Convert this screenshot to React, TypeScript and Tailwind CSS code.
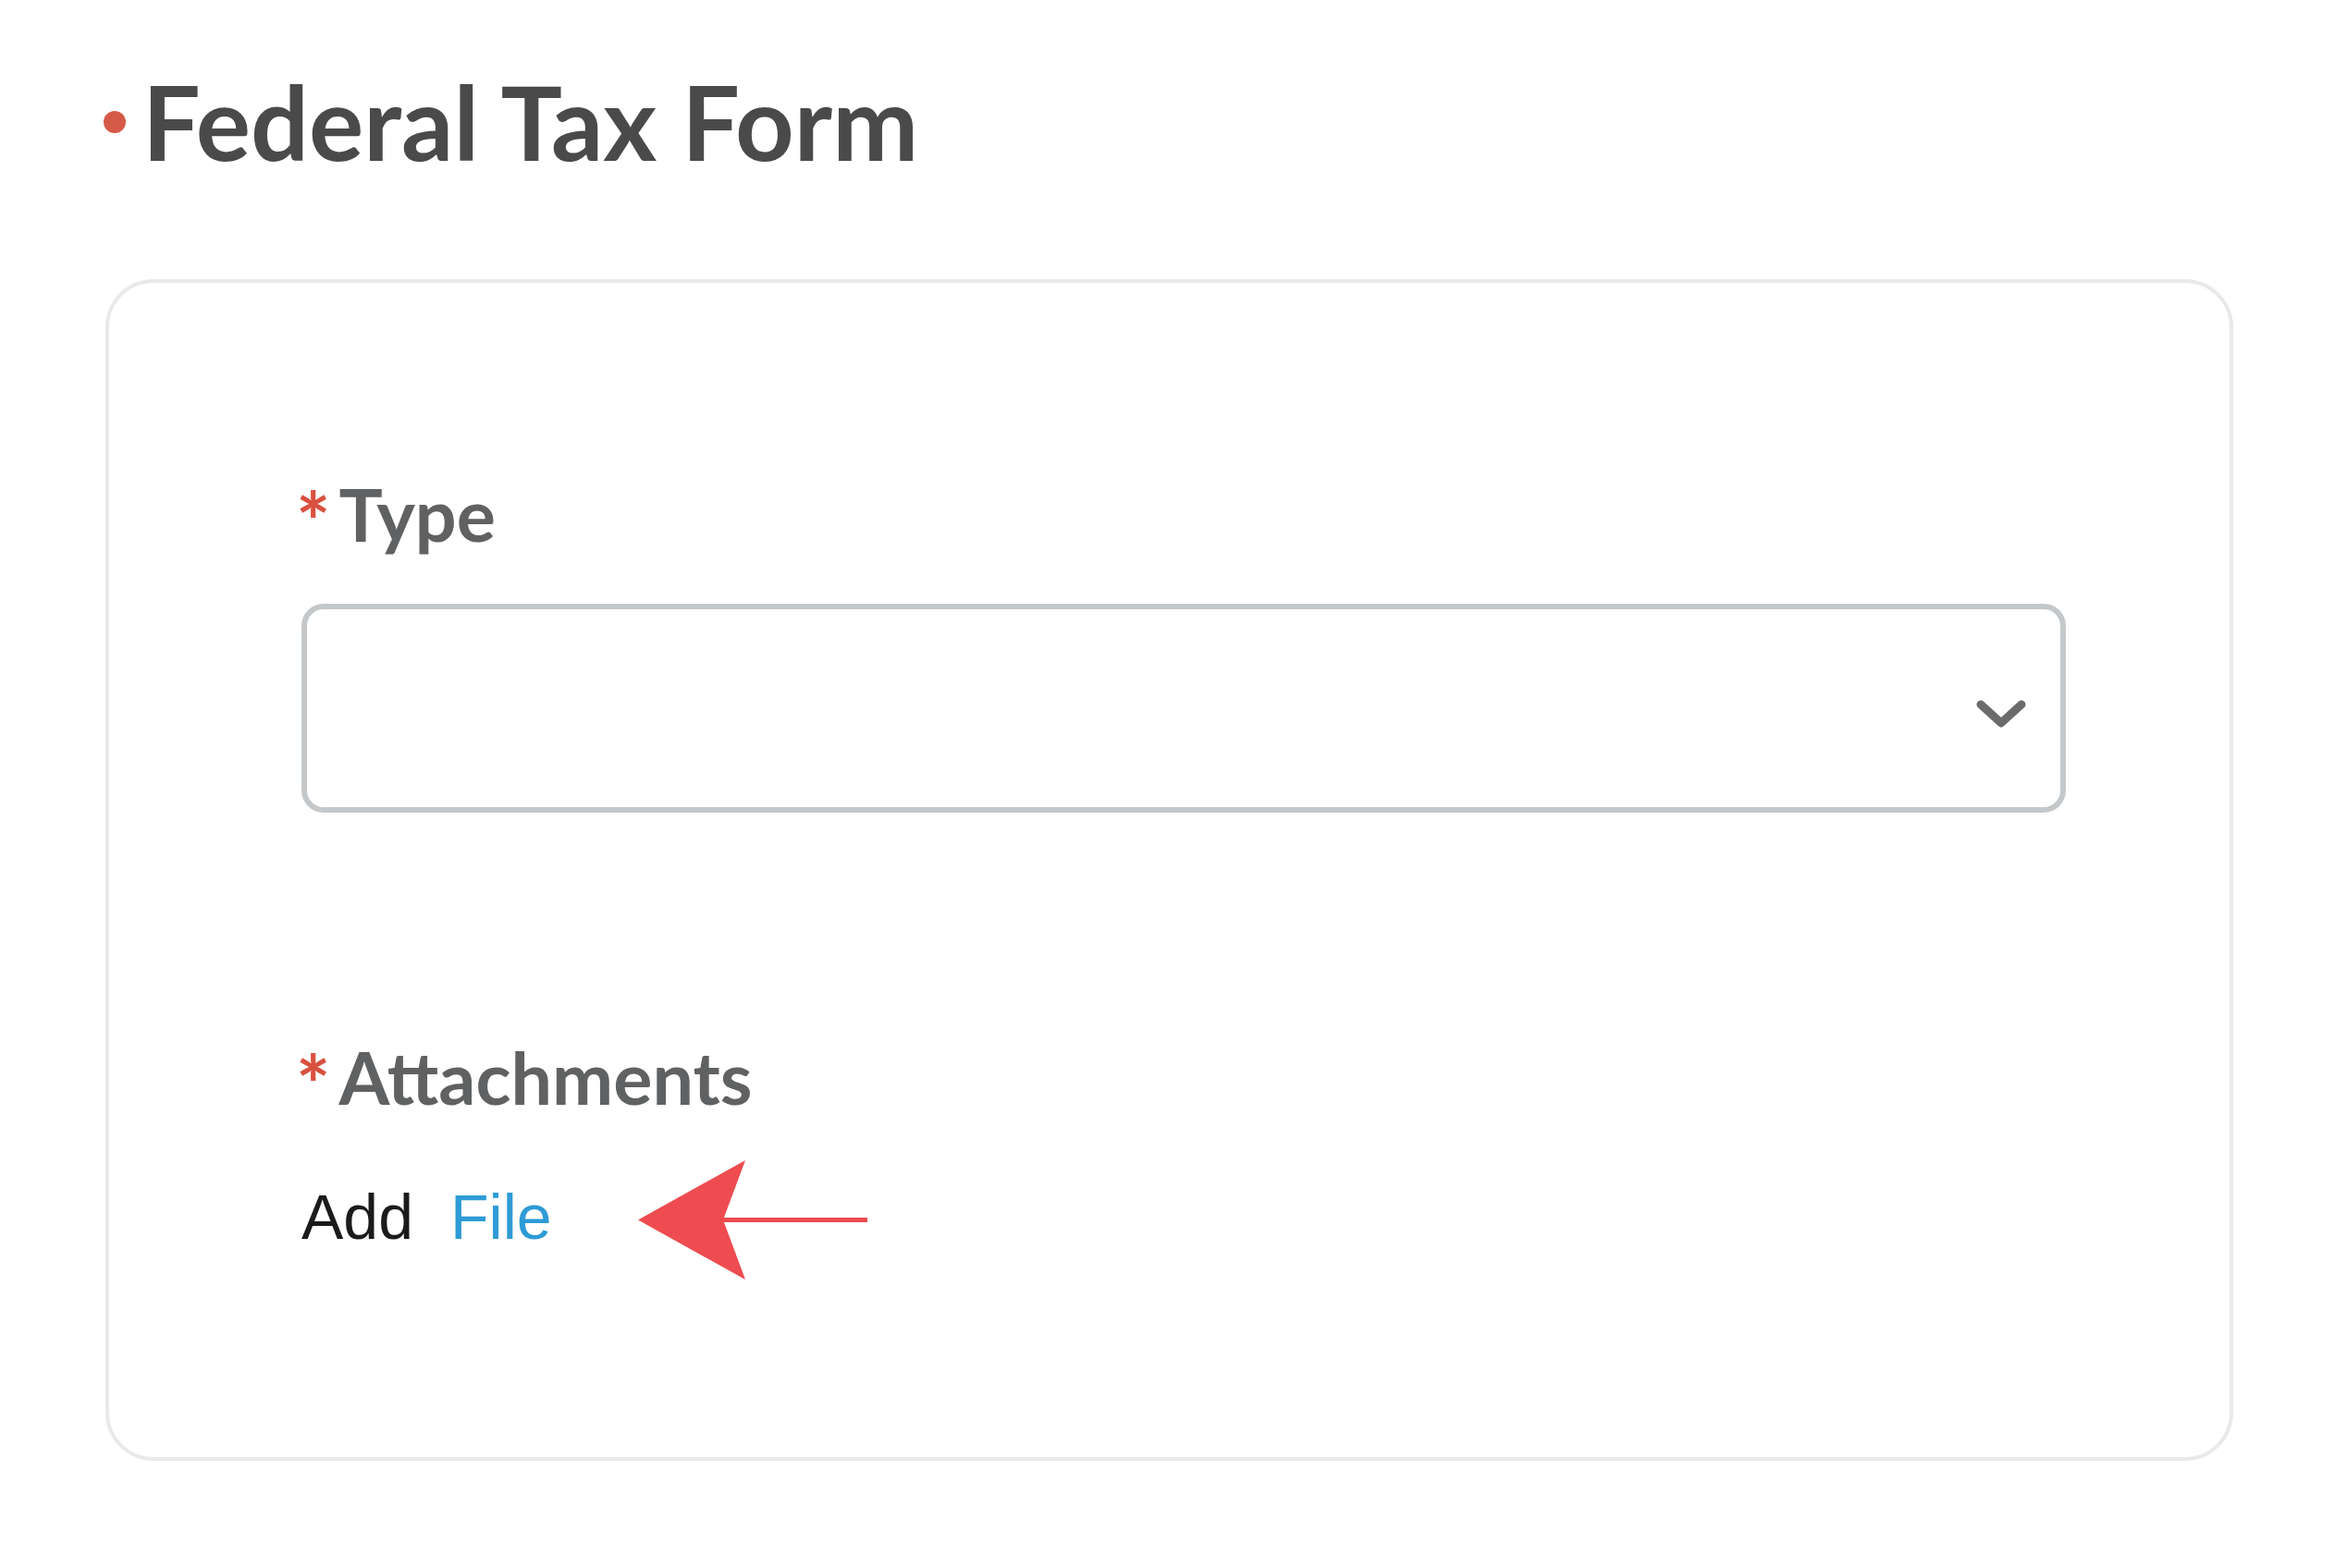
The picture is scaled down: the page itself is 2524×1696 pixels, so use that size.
import React from "react";

const RequiredLabel = ({ text }: { text: string }) => (
  <div className="flex items-start h-[79px] text-[#606162] font-bold leading-none">
    <span className="text-[88px] mt-[3px] ml-[-6px] mr-[9px] text-[#d9503f]">*</span>
    <span className="text-[79px]">{text}</span>
  </div>
);

const App = () => {
  return (
    <div
      className="min-h-[1696px] w-full bg-white"
      style={{ fontFamily: "Lato, 'Noto Sans', sans-serif" }}
    >
      {/* title */}
      <div className="flex items-center pl-[112px] pt-[76px]">
        <span className="w-[24px] h-[24px] rounded-full bg-[#d65a48] mr-[18px]" />
        <h1 className="text-[111px] font-bold leading-none text-[#4b4a4a]">
          Federal Tax Form
        </h1>
      </div>

      {/* card */}
      <div className="ml-[114px] mr-[109px] mt-[115px] border-4 border-[#e8e9eb] rounded-[52px] pl-[208px] pr-[177px] pt-[210px] pb-[192px]">
        {/* type */}
        <RequiredLabel text="Type" />
        <div className="mt-[58px] h-[226px] border-[6px] border-[#c4c8ca] rounded-[24px] flex items-center justify-end pr-[37px]">
          <svg
            width="54"
            height="31"
            viewBox="0 0 54 31"
            fill="none"
            stroke="#6b6b6b"
            strokeWidth={9}
            strokeLinecap="round"
            strokeLinejoin="round"
            className="mt-[12px]"
          >
            <path d="M5 5 L27 25 L49 5" />
          </svg>
        </div>

        {/* attachments */}
        <div className="mt-[246px]">
          <RequiredLabel text="Attachments" />
        </div>
        <div
          className="mt-[51px] flex items-center"
          style={{ fontFamily: "'Liberation Sans', Arial, sans-serif" }}
        >
          <span className="text-[68px] leading-none pb-[8px] text-[#1b1b1b]">Add</span>
          <span className="text-[68px] leading-none pb-[8px] ml-[40px] text-[#2e9bd6]">
            File
          </span>
          <svg
            width="248"
            height="129"
            viewBox="0 0 248 129"
            className="ml-[93px]"
          >
            <line x1="90" y1="64.5" x2="248" y2="64.5" stroke="#ee4c50" strokeWidth={5} />
            <path d="M0 64.5 L116 0 L92 64.5 L116 129 Z" fill="#ee4c50" />
          </svg>
        </div>
      </div>
    </div>
  );
};

export default App;
